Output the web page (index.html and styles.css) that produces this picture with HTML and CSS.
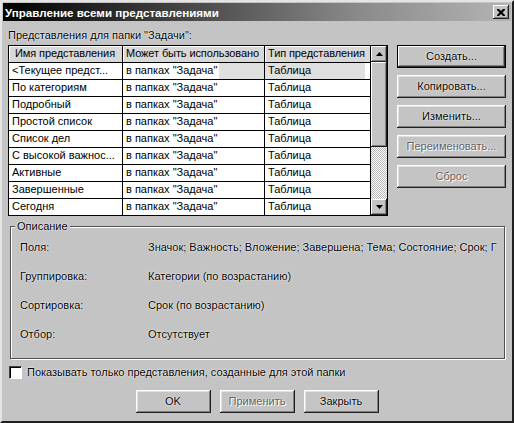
FILE: index.html
```html
<!DOCTYPE html>
<html lang="ru">
<head>
<meta charset="utf-8">
<title>Управление всеми представлениями</title>
<link rel="stylesheet" href="styles.css">
</head>
<body>
<div class="window">
  <div class="titlebar">
    <span class="title">Управление всеми представлениями</span>
    <span class="close"><svg width="8" height="7" viewBox="0 0 8 7"><path d="M0 0h2l2 2 2-2h2v1l-2.5 2.5L8 6v1H6L4 5 2 7H0V6l2.5-2.5L0 1z" fill="#000"/></svg></span>
  </div>
  <div class="content">
    <div class="caption">Представления для папки "Задачи":</div>
    <div class="main">
      <div class="list">
        <div class="grid">
          <div class="cell head">Имя представления</div>
          <div class="cell head">Может быть использовано</div>
          <div class="cell head">Тип представления</div>

          <div class="cell c1">&lt;Текущее предст...</div>
          <div class="cell sel2">в папках "Задача"</div>
          <div class="cell sel3">Таблица</div>

          <div class="cell c1">По категориям</div>
          <div class="cell">в папках "Задача"</div>
          <div class="cell">Таблица</div>

          <div class="cell c1">Подробный</div>
          <div class="cell">в папках "Задача"</div>
          <div class="cell">Таблица</div>

          <div class="cell c1">Простой список</div>
          <div class="cell">в папках "Задача"</div>
          <div class="cell">Таблица</div>

          <div class="cell c1">Список дел</div>
          <div class="cell">в папках "Задача"</div>
          <div class="cell">Таблица</div>

          <div class="cell c1">С высокой важнос...</div>
          <div class="cell">в папках "Задача"</div>
          <div class="cell">Таблица</div>

          <div class="cell c1">Активные</div>
          <div class="cell">в папках "Задача"</div>
          <div class="cell">Таблица</div>

          <div class="cell c1">Завершенные</div>
          <div class="cell">в папках "Задача"</div>
          <div class="cell">Таблица</div>

          <div class="cell c1">Сегодня</div>
          <div class="cell">в папках "Задача"</div>
          <div class="cell">Таблица</div>
        </div>
        <div class="scrollbar">
          <div class="sb-btn"><svg width="7" height="4" viewBox="0 0 7 4"><path d="M3.5 0L7 4H0z" fill="#000"/></svg></div>
          <div class="sb-thumb"></div>
          <div class="sb-track"></div>
          <div class="sb-btn"><svg width="7" height="4" viewBox="0 0 7 4"><path d="M0 0h7L3.5 4z" fill="#000"/></svg></div>
        </div>
      </div>
      <div class="actions">
        <button class="btn default">Создать...</button>
        <button class="btn">Копировать...</button>
        <button class="btn">Изменить...</button>
        <button class="btn disabled">Переименовать...</button>
        <button class="btn disabled">Сброс</button>
      </div>
    </div>
    <div class="group">
      <span class="group-title">Описание</span>
      <div class="desc">
        <span>Поля:</span><span>Значок; Важность; Вложение; Завершена; Тема; Состояние; Срок; Г</span>
        <span>Группировка:</span><span>Категории (по возрастанию)</span>
        <span>Сортировка:</span><span>Срок (по возрастанию)</span>
        <span>Отбор:</span><span>Отсутствует</span>
      </div>
    </div>
    <label class="check"><span class="box"></span>Показывать только представления, созданные для этой папки</label>
    <div class="footer">
      <button class="btn fbtn">OK</button>
      <button class="btn fbtn disabled">Применить</button>
      <button class="btn fbtn">Закрыть</button>
    </div>
  </div>
</div>
</body>
</html>
```

FILE: styles.css
```css
html, body {
  margin: 0;
  padding: 0;
  background: #c4c4c4;
}

body {
  font: 11px/13px "Liberation Sans", Arial, sans-serif;
  color: #000;
}

.window {
  width: 514px;
  height: 423px;
  box-sizing: border-box;
  border: 2px solid;
  border-color: #e4e4e4 #202020 #202020 #e4e4e4;
  padding: 1px;
  background: #c4c4c4;
  text-shadow: 0 0 2px #fff, 0 0 1px #fff;
}

.titlebar {
  height: 18px;
  display: flex;
  align-items: center;
  justify-content: space-between;
  padding: 0 2px 0 2px;
  background: linear-gradient(90deg, #000 0%, #3a3a3a 30%, #8a8a8a 70%, #b4b4b4 100%);
  color: #fff;
  font-weight: bold;
  font-size: 11.6px;
  text-shadow: none;
}

.close {
  width: 16px;
  height: 14px;
  box-sizing: border-box;
  display: flex;
  align-items: center;
  justify-content: center;
  background: #c4c4c4;
  box-shadow: inset -1px -1px #202020, inset 1px 1px #fff, inset -2px -2px #808080;
}

.content {
  padding: 8px 5px 0 5px;
}

.caption {
  height: 13px;
  margin-bottom: 3px;
}

.main {
  display: flex;
  align-items: flex-start;
  gap: 9px;
}

.list {
  display: flex;
  border-top: 1px solid #000;
  border-left: 1px solid #000;
  text-shadow: none;
}

.grid {
  display: grid;
  grid-template-columns: 114px 142px 106px;
  grid-auto-rows: 17px;
  background: #fff;
}

.cell {
  box-sizing: border-box;
  border-right: 1px solid #000;
  border-bottom: 1px solid #000;
  padding: 1px 0 0 3px;
  white-space: nowrap;
  overflow: hidden;
}

.cell.head {
  background: #d8d8d8;
  padding-left: 3px;
  letter-spacing: -0.1px;
  box-shadow: inset 1px 1px #fff;
}

.cell.head:first-child {
  padding-left: 6px;
}

.sel2 {
  background: linear-gradient(90deg, #fff 0 96px, #e0e0e0 96px);
}

.sel3 {
  background: linear-gradient(90deg, #e0e0e0 0 100px, #fff 100px);
}

.scrollbar {
  width: 17px;
  height: 170px;
  box-sizing: border-box;
  border-right: 1px solid #000;
  border-bottom: 1px solid #000;
  display: flex;
  flex-direction: column;
}

.sb-btn {
  height: 16px;
  flex: none;
  display: flex;
  align-items: center;
  justify-content: center;
  background: #c4c4c4;
  box-shadow: inset -1px -1px #202020, inset 1px 1px #fff, inset -2px -2px #808080;
}

.sb-thumb {
  height: 85px;
  flex: none;
  background: #c4c4c4;
  box-shadow: inset -1px -1px #202020, inset 1px 1px #fff, inset -2px -2px #808080;
}

.sb-track {
  flex: 1;
  background: repeating-conic-gradient(#ffffff 0 25%, #b8b8b8 0 50%) 0 0 / 2px 2px;
}

.actions {
  display: flex;
  flex-direction: column;
  gap: 7px;
}

.btn {
  width: 109px;
  height: 23px;
  padding: 0;
  border: 0;
  font: inherit;
  color: #000;
  background: #c4c4c4;
  text-shadow: 0 0 2px #fff, 0 0 1px #fff;
  box-shadow: inset -1px -1px #202020, inset 1px 1px #fff, inset -2px -2px #808080, inset 2px 2px #e0e0e0;
}

.btn.default {
  box-shadow: inset 0 0 0 1px #000, inset -2px -2px #303030, inset 2px 2px #fff, inset -3px -3px #808080;
}

.btn.disabled {
  color: #5e5e5e;
  text-shadow: 0 0 2px #fff, 1px 1px #fff;
}

.group {
  position: relative;
  margin: 10px 0 0 2px;
  width: 495px;
  height: 133px;
  box-sizing: border-box;
  border: 1px solid #505050;
  box-shadow: inset 1px 1px #fff, 1px 1px #fff;
}

.group-title {
  position: absolute;
  top: -7px;
  left: 4px;
  padding: 0 2px;
  background: #c4c4c4;
}

.desc {
  display: grid;
  grid-template-columns: 128px 1fr;
  grid-auto-rows: 29px;
  align-items: center;
  padding: 6px 0 0 9px;
  white-space: nowrap;
}

.check {
  display: flex;
  align-items: center;
  gap: 5px;
  margin: 7px 0 0 1px;
  height: 13px;
}

.box {
  width: 13px;
  height: 13px;
  box-sizing: border-box;
  background: #fff;
  border: 1px solid;
  border-color: #404040 #fff #fff #404040;
  box-shadow: inset 1px 1px #000;
}

.footer {
  display: flex;
  justify-content: center;
  gap: 9px;
  margin-top: 11px;
}

.btn.fbtn {
  width: 75px;
}
```
